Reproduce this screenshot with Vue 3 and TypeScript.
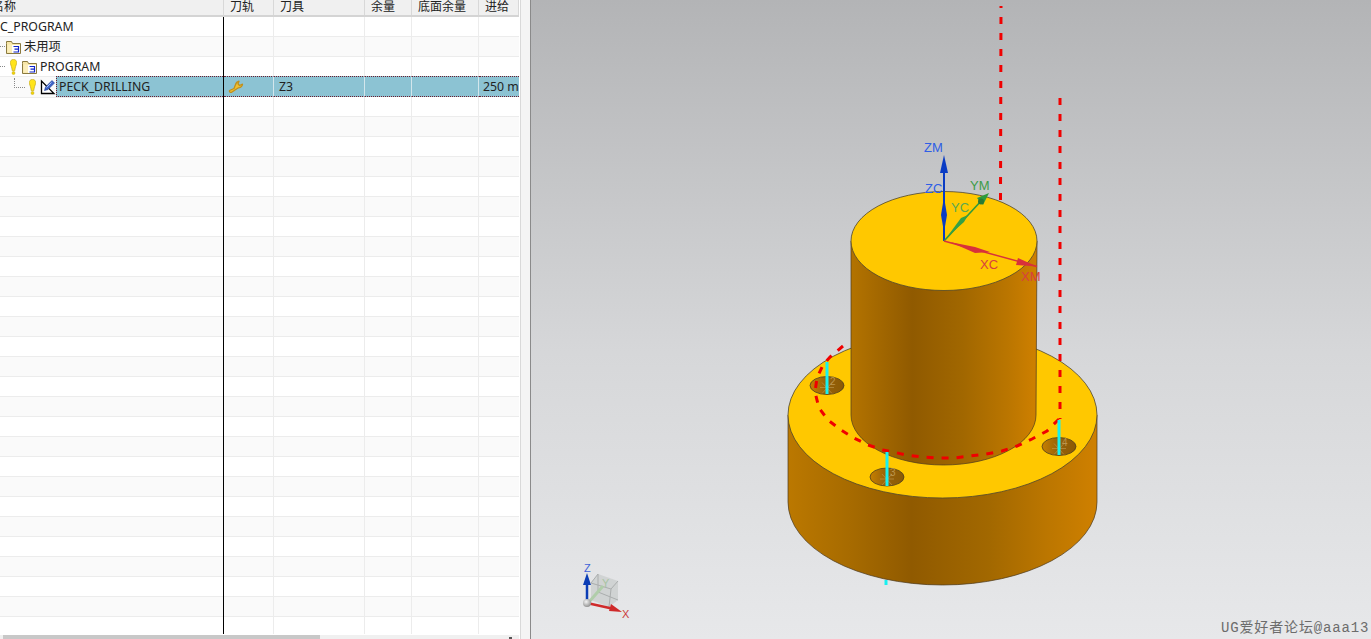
<script setup lang="ts">
interface Column {
  title: string
  width: number
}

interface Row {
  id: number
  name?: string
  kind?: 'root' | 'unused' | 'program' | 'operation'
  tool?: string
  feed?: string
}

const columns: Column[] = [
  { title: '名称', width: 224 },
  { title: '刀轨', width: 50 },
  { title: '刀具', width: 91 },
  { title: '余量', width: 47 },
  { title: '底面余量', width: 67 },
  { title: '进给', width: 40 },
]

const gridColumns = columns.map((c) => `${c.width}px`).join(' ')

const filled: Row[] = [
  { id: 1, name: 'C_PROGRAM', kind: 'root' },
  { id: 2, name: '未用项', kind: 'unused' },
  { id: 3, name: 'PROGRAM', kind: 'program' },
  { id: 4, name: 'PECK_DRILLING', kind: 'operation', tool: 'Z3', feed: '250 m' },
]

const rows: Row[] = [
  ...filled,
  ...Array.from({ length: 27 }, (_, i) => ({ id: i + 5 })),
]

const pathPoints = [
  [843, 346], [830, 357], [823, 365], [817, 378], [815, 392], [819, 408], [828, 420],
  [841, 430], [854, 438], [868, 445], [883, 450], [893, 452], [906, 455], [922, 457],
  [938, 458], [954, 458], [970, 456], [986, 454], [1002, 451], [1017, 446], [1032, 439],
  [1047, 431], [1059, 419],
]
  .map((p) => p.join(','))
  .join(' ')

const holes = [
  { x: 827, y: 385.5, top: 362, bottom: 394, label: '2' },
  { x: 887, y: 477, top: 452, bottom: 486, label: '3' },
  { x: 1059, y: 446.5, top: 420, bottom: 455, label: '4' },
]
</script>

<template>
  <div class="page">
    <section class="navigator">
      <div class="table">
        <div class="head" :style="{ gridTemplateColumns: gridColumns }">
          <div v-for="(col, i) in columns" :key="col.title" class="head-cell" :class="{ first: i === 0 }">
            {{ col.title }}
          </div>
        </div>

        <div class="body">
          <div
            v-for="row in rows"
            :key="row.id"
            class="row"
            :class="{ stripe: row.id % 2 === 0, selected: row.kind === 'operation' }"
            :style="{ gridTemplateColumns: gridColumns }"
          >
            <div class="cell name" :class="row.kind">
              <span v-if="row.kind === 'unused' || row.kind === 'program'" class="dots-h"></span>
              <span v-if="row.kind === 'operation'" class="elbow"></span>

              <svg v-if="row.kind === 'program' || row.kind === 'operation'" class="bulb" width="7" height="16" viewBox="0 0 7 16">
                <path d="M3.500 .4C1.400 .4 .3 1.800 .3 3.500c0 1.800 1 3.200 1.500 5.500l.5 2.800h2.400l.5-2.800c.5-2.300 1.500-3.700 1.500-5.500C6.700 1.800 5.600 .4 3.500 .4z" fill="#ffe41a" stroke="#c4a818" stroke-width=".7" />
                <circle cx="3.500" cy="14" r="1.500" fill="#f2d400" stroke="#c4a818" stroke-width=".5" />
              </svg>

              <svg v-if="row.kind === 'unused' || row.kind === 'program'" class="folder" width="15" height="14" viewBox="0 0 15 14">
                <path d="M.5 3.500V1.500h5l1 2h8v10H.5z" fill="#f7e6a6" stroke="#8a7a40" />
                <rect x="1.500" y="4.500" width="12" height="8" fill="#fbeebc" />
                <rect x="6" y="5" width="8" height="8" fill="#fff" />
                <path d="M7.500 6.500h5v5.500h-5M8.500 9.200h3.500" fill="none" stroke="#1226c8" stroke-width="1.200" />
              </svg>

              <svg v-if="row.kind === 'operation'" class="op" width="16" height="16" viewBox="0 0 16 16">
                <path d="M1.500 2v12.500H14L1.500 2z" fill="#fff" stroke="#000" stroke-width="1.300" />
                <path d="M4.500 11.500l1-3.500 6.500-6.500 2.500 2.500-6.500 6.500z" fill="#3d63c8" stroke="#1f3a90" stroke-width=".6" />
                <path d="M6.500 8.500l5-5" stroke="#a9c0f2" />
              </svg>

              <span class="label">{{ row.name }}</span>
            </div>

            <div class="cell">
              <svg v-if="row.kind === 'operation'" class="wrench" width="16" height="14" viewBox="0 0 16 14">
                <path d="M1.500 10.500L6 8.500C7 6.500 7.500 3.500 9 2L11 1.200 10 3.800 11.500 5.500 14.500 4.200C14.300 6.300 12.800 7.500 10.500 7.800L8.500 9 4 12C2.500 13 1 12 1.500 10.500Z" fill="#f0c030" stroke="#c08f1c" stroke-width="1.300" stroke-linejoin="round" />
              </svg>
            </div>
            <div class="cell text">{{ row.tool }}</div>
            <div class="cell"></div>
            <div class="cell"></div>
            <div class="cell text feed">{{ row.feed }}</div>
          </div>
        </div>

        <div class="scrollbar">
          <div class="thumb"></div>
          <span class="scroll-mark"></span>
        </div>

        <span class="column-rule"></span>
      </div>
    </section>

    <div class="gutter"></div>

    <section class="viewport">
      <svg class="scene" viewBox="531 0 840 639" width="840" height="639">
        <defs>
          <linearGradient id="sky" x1="0" y1="0" x2="0" y2="1">
            <stop offset="0" stop-color="#b3b4b6" />
            <stop offset=".55" stop-color="#d6d7d9" />
            <stop offset="1" stop-color="#e7e8ea" />
          </linearGradient>
          <linearGradient id="baseSide" gradientUnits="userSpaceOnUse" x1="788" y1="0" x2="1097" y2="0">
            <stop offset="0" stop-color="#bb7800" />
            <stop offset=".2" stop-color="#a76b00" />
            <stop offset=".4" stop-color="#905a00" />
            <stop offset=".65" stop-color="#a26800" />
            <stop offset=".85" stop-color="#bd7700" />
            <stop offset="1" stop-color="#cf8000" />
          </linearGradient>
          <linearGradient id="neckSide" gradientUnits="userSpaceOnUse" x1="851" y1="0" x2="1037" y2="0">
            <stop offset="0" stop-color="#b37300" />
            <stop offset=".33" stop-color="#905a00" />
            <stop offset=".6" stop-color="#a16700" />
            <stop offset=".85" stop-color="#bb7600" />
            <stop offset="1" stop-color="#cf8000" />
          </linearGradient>
          <linearGradient id="holeFill" x1="0" y1="0" x2="1" y2="0">
            <stop offset="0" stop-color="#c67f00" />
            <stop offset=".5" stop-color="#96610a" />
            <stop offset="1" stop-color="#8b5a05" />
          </linearGradient>
          <radialGradient id="ball" cx=".4" cy=".35" r=".7">
            <stop offset="0" stop-color="#f4f4f4" />
            <stop offset="1" stop-color="#8c8c8c" />
          </radialGradient>
        </defs>

        <rect x="531" y="0" width="840" height="639" fill="url(#sky)" />

        <path class="line-red first-drop" d="M1001 6L1000.500 200" />

        <!-- flange -->
        <path d="M788 415V502A154.500 83 0 0 0 1097 502V415Z" fill="url(#baseSide)" stroke="#4a3a20" stroke-width=".7" />
        <ellipse cx="942.500" cy="415" rx="154.500" ry="83" fill="#ffc800" stroke="#4d4530" stroke-width=".8" />

        <g v-for="hole in holes" :key="hole.label">
          <ellipse :cx="hole.x" :cy="hole.y" rx="17" ry="9" fill="url(#holeFill)" stroke="#4d3d20" stroke-width=".8" />
          <text class="hole-label" :x="hole.x + 3" :y="hole.y - 1">{{ hole.label }}</text>
          <path
            :d="`M${hole.x - 7} ${hole.y + 2}H${hole.x + 7}M${hole.x - 5} ${hole.y + 8}L${hole.x + 5} ${hole.y - 3}M${hole.x - 5} ${hole.y - 3}L${hole.x + 5} ${hole.y + 8}`"
            class="hole-mark"
          />
        </g>

        <!-- neck -->
        <path d="M851 241V415A92.500 50 0 0 0 1036 415L1037 241Z" fill="url(#neckSide)" stroke="#4a3a20" stroke-width=".7" />
        <ellipse cx="944" cy="241" rx="93" ry="49.500" fill="#ffc800" stroke="#4d4530" stroke-width=".8" />

        <!-- tool path -->
        <path class="line-red" d="M1060 98V419" />
        <polyline class="line-red arc" fill="none" :points="pathPoints" />
        <line v-for="hole in holes" :key="hole.x" class="line-cyan" :x1="hole.x" :x2="hole.x" :y1="hole.top" :y2="hole.bottom" />
        <line class="line-cyan" x1="886" x2="886" y1="580" y2="585" />

        <!-- work and machine axes -->
        <path d="M944 241V170" stroke="#0a3cc4" stroke-width="2" />
        <path d="M944 155L948 173H940Z" fill="#0a3cc4" />
        <path d="M944 197L947 215 944 232 941 215Z" fill="#0a3cc4" />
        <path d="M944 241L982 200" stroke="#2f9a3c" stroke-width="1.600" />
        <path d="M989 193L977 198 983 205Z" fill="#2f9a3c" />
        <circle cx="981" cy="201.500" r="3" fill="#2a7a35" />
        <path d="M947 237L961 218 968 215 964 222Z" fill="#35a045" />
        <path d="M944 241L1037 266.500" stroke="#d8323a" stroke-width="1.500" />
        <path d="M1037 266.500L1018 258 1016 265Z" fill="#d8323a" />
        <path d="M950 242L975 247 990 252 975 253Z" fill="#d8323a" />

        <text class="axis blue" x="924" y="152">ZM</text>
        <text class="axis blue" x="925" y="193">ZC</text>
        <text class="axis green" x="970" y="190">YM</text>
        <text class="axis green light" x="951" y="212">YC</text>
        <text class="axis red" x="980" y="269">XC</text>
        <text class="axis red" x="1021" y="281">XM</text>

        <!-- view triad -->
        <g class="cube">
          <path d="M598 574L618 581 618 600 609 607 591 600 591 583Z" fill="#cdd0d0" fill-opacity=".9" />
          <path d="M591 583L611 589 618 581M611 589L609 607M598 574L591 583M598 574V592L591 600M598 592L618 600" fill="none" stroke="#abaeae" />
        </g>
        <path d="M589 602L603 586" stroke="#b0cdaa" stroke-width="3" />
        <text class="triad-y" x="602" y="587">Y</text>
        <path d="M587 603V582" stroke="#0b3db5" stroke-width="2.500" />
        <path d="M587 573L591 585H583Z" fill="#0b3db5" />
        <path d="M587 603L614 609" stroke="#cf2a2a" stroke-width="2.500" />
        <path d="M622 612L611 604 609 611Z" fill="#cf2a2a" />
        <circle cx="587" cy="603" r="4" fill="url(#ball)" />
        <text class="triad-z" x="584" y="572">Z</text>
        <text class="triad-x" x="622" y="618">X</text>

        <text class="watermark" x="1221" y="632">UG爱好者论坛@aaa13</text>
      </svg>
    </section>
  </div>
</template>

<style scoped>
.page {
  display: flex;
  width: 1371px;
  height: 639px;
  overflow: hidden;
  background: #fff;
  font-family: "Noto Sans", "Noto Sans CJK SC", sans-serif;
  font-size: 12px;
  color: #222;
}

.navigator {
  width: 520px;
  flex: none;
  border-right: 1px solid #d9d9d9;
  overflow: hidden;
}

.table {
  position: relative;
  width: 519px;
  height: 639px;
  display: flex;
  flex-direction: column;
  overflow: hidden;
}

.column-rule {
  position: absolute;
  left: 223px;
  top: 17px;
  width: 1px;
  height: 617px;
  background: #000;
}

.head {
  display: grid;
  flex: none;
  height: 17px;
  box-sizing: border-box;
  background: #f0f0f0;
  border-bottom: 2px solid #d4d4d4;
}

.head-cell {
  padding-left: 6px;
  line-height: 14px;
  border-right: 1px solid #d8d8d8;
  white-space: nowrap;
}

.head-cell.first {
  padding-left: 0;
  text-indent: -8px;
  overflow: hidden;
}

.body {
  flex: 1;
  min-height: 0;
  overflow: hidden;
}

.row {
  display: grid;
  height: 20px;
  box-sizing: border-box;
  border-bottom: 1px solid #ececec;
  background: #fff;
}

.row.stripe {
  background: #fafafa;
}

.cell {
  display: flex;
  align-items: center;
  min-width: 0;
  border-right: 1px solid #ececec;
  white-space: nowrap;
  overflow: hidden;
  font-size: 12.3px;
}

.cell.text {
  padding-left: 5px;
}

.cell.name {
  overflow: hidden;
}

.cell.feed {
  padding-left: 4px;
  border-right: none;
}

.label {
  line-height: 19px;
}

.name.unused .label,
.name.program .label {
  margin-left: 3px;
}

.dots-h {
  width: 5px;
  border-top: 1px dotted #888;
  flex: none;
}

.bulb,
.folder,
.op,
.wrench {
  flex: none;
}

.name.unused .folder {
  margin-left: 1px;
}

.name.program .bulb {
  margin-left: 5px;
  margin-right: 5px;
}

.name.operation {
  padding-left: 14px;
}

.elbow {
  width: 11px;
  height: 10px;
  margin-top: -9px;
  flex: none;
  box-sizing: border-box;
  border-left: 1px dotted #888;
  border-bottom: 1px dotted #888;
}

.name.operation .bulb {
  margin-left: 4px;
}

.op {
  margin-left: 4px;
}

.wrench {
  margin-left: 4px;
}

.row.selected {
  border-bottom: none;
  overflow: visible;
}

.row.selected .cell:not(.name) {
  background: #8cc3d3;
  margin-top: -1px;
  height: 21px;
  box-sizing: border-box;
  border-top: 1px dotted #6e1d2e;
  border-bottom: 1px dotted #6e1d2e;
  border-right-color: #d3e6ec;
}

.row.selected .name .label {
  flex: 1;
  align-self: stretch;
  margin-top: -1px;
  padding-left: 2px;
  height: 21px;
  box-sizing: border-box;
  background: #8cc3d3;
  border-top: 1px dotted #6e1d2e;
  border-bottom: 1px dotted #6e1d2e;
  border-left: 1px dotted #6e1d2e;
}

.row.selected .name {
  overflow: visible;
  border-bottom: 1px solid #ececec;
}

.scrollbar {
  flex: none;
  position: relative;
  height: 4px;
  margin-top: 1px;
  background: #f0f0f0;
  padding-left: 3px;
}

.thumb {
  width: 317px;
  height: 100%;
  background: #c8c8c8;
}

.scroll-mark {
  position: absolute;
  left: 509px;
  top: 2px;
  width: 3px;
  height: 2px;
  background: #555;
}

.gutter {
  width: 9px;
  flex: none;
  background: #f4f4f4;
  border-right: 1px solid #8a8a8a;
}

.viewport {
  flex: 1;
  min-width: 0;
}

.scene {
  display: block;
}

.line-red {
  stroke: #f00000;
  stroke-width: 3;
  stroke-dasharray: 7 9;
}

.line-red.first-drop {
  stroke-dashoffset: 5;
}

.line-red.arc {
  stroke-dasharray: 7 8;
}

.line-cyan {
  stroke: #18f0f0;
  stroke-width: 3;
}

.hole-label {
  font-size: 10px;
  fill: #d8b878;
  opacity: .6;
  font-family: "Liberation Sans", sans-serif;
}

.hole-mark {
  stroke: #caa868;
  stroke-width: .8;
  opacity: .6;
  fill: none;
}

.axis {
  font-family: "Liberation Sans", sans-serif;
  font-size: 13px;
}

.axis.blue {
  fill: #2f5ee6;
}

.axis.green {
  fill: #3d9c48;
}

.axis.green.light {
  fill: #5aa850;
}

.axis.red {
  fill: #d8403f;
}

.triad-y {
  font-family: "Liberation Sans", sans-serif;
  font-size: 11px;
  fill: #a9c4a4;
}

.triad-z {
  font-family: "Liberation Sans", sans-serif;
  font-size: 11px;
  fill: #3f62d8;
}

.triad-x {
  font-family: "Liberation Sans", sans-serif;
  font-size: 11px;
  fill: #cc3b3b;
}

.watermark {
  font-family: "Liberation Mono", "Noto Sans CJK SC", monospace;
  font-size: 14px;
  letter-spacing: .85px;
  fill: #6c6c6c;
}
</style>
